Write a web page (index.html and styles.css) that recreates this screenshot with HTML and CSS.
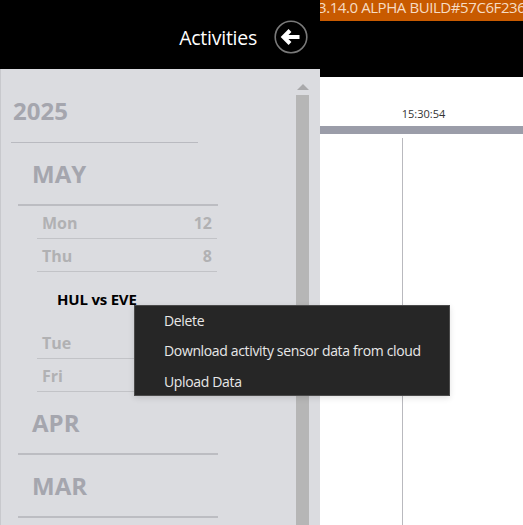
FILE: index.html
```html
<!DOCTYPE html>
<html lang="en">

<head>
    <meta charset="UTF-8">
    <meta name="viewport" content="width=device-width, initial-scale=1.0">
    <link rel="stylesheet" href="styles.css">
</head>

<body>
    <div class="App">
        <div class="Sidebar">
            <div class="SidebarHeader">
                <span class="SidebarTitle">Activities</span>
                <svg class="BackIcon" width="34" height="34" viewBox="0 0 34 34">
                    <circle cx="17" cy="17" r="15.8" fill="none" stroke="#7a7a7a" stroke-width="1.6" />
                    <path d="M16 10.5 L9.5 17 L16 23.5 M10 17 H25.5" fill="none" stroke="#ffffff" stroke-width="4" />
                </svg>
            </div>
            <div class="SidebarBody">
                <div class="ActivityList">
                    <div class="Year">2025</div>
                    <div class="Month">MAY</div>
                    <div class="Day"><span>Mon</span><span>12</span></div>
                    <div class="Day"><span>Thu</span><span>8</span></div>
                    <div class="Activity">HUL vs EVE</div>
                    <div class="Day"><span>Tue</span></div>
                    <div class="Day"><span>Fri</span></div>
                    <div class="Month">APR</div>
                    <div class="Month">MAR</div>
                </div>
                <div class="Scrollbar">
                    <div class="ScrollArrow"></div>
                    <div class="ScrollThumb"></div>
                </div>
            </div>
        </div>
        <div class="Main">
            <div class="TopBar">
                <div class="BuildBanner">3.14.0 ALPHA BUILD#57C6F236</div>
            </div>
            <div class="Timeline">
                <div class="TimeLabel">15:30:54</div>
                <div class="TimeBar"></div>
                <div class="TimeMarker"></div>
            </div>
        </div>
    </div>

    <div class="ContextMenu">
        <div class="MenuItem">Delete</div>
        <div class="MenuItem">Download activity sensor data from cloud</div>
        <div class="MenuItem">Upload Data</div>
    </div>
</body>

</html>
```

FILE: styles.css
```css
body {
    margin: 0;
    font-family: 'Open Sans', 'Noto Sans', sans-serif;
    background-color: #ffffff;
    overflow: hidden;
}

.App {
    display: flex;
    width: 523px;
    height: 525px;
}

.Sidebar {
    width: 320px;
    display: flex;
    flex-direction: column;
}

.SidebarHeader {
    height: 69px;
    box-sizing: border-box;
    background: #000000;
    display: flex;
    justify-content: flex-end;
    align-items: center;
    padding: 5px 12px 0 0;
    gap: 17px;
}

.SidebarTitle {
    color: #ffffff;
    font-size: 19.5px;
    letter-spacing: -0.25px;
}

.SidebarBody {
    flex: 1;
    display: flex;
    background: #dbdce0;
    border-left: 1px solid #c8c9cd;
    overflow: hidden;
}

.ActivityList {
    width: 295px;
    box-sizing: border-box;
    padding: 25px 0 0 10px;
}

.Year {
    width: 187px;
    height: 49px;
    box-sizing: border-box;
    padding-left: 2px;
    border-bottom: 1px solid #b9bac0;
    color: #a5a6ae;
    font-size: 24px;
    font-weight: 700;
    line-height: 33px;
}

.Month {
    width: 200px;
    height: 63px;
    box-sizing: border-box;
    margin-left: 7px;
    padding: 14px 0 0 14px;
    border-bottom: 2px solid #bcbdc2;
    color: #a5a6ae;
    font-size: 24px;
    font-weight: 700;
    line-height: 33px;
}

.Day {
    width: 180px;
    height: 33px;
    box-sizing: border-box;
    margin-left: 26px;
    padding: 7px 5px 0 5px;
    display: flex;
    justify-content: space-between;
    border-bottom: 1px solid #c2c3c7;
    color: #b1b1b3;
    font-size: 16px;
    font-weight: 700;
    line-height: 21px;
}

.Activity {
    height: 54px;
    box-sizing: border-box;
    padding: 18px 0 0 46px;
    color: #000000;
    font-size: 15px;
    font-weight: 700;
    line-height: 19px;
    letter-spacing: -0.2px;
}

.Scrollbar {
    width: 13px;
    display: flex;
    flex-direction: column;
    align-items: center;
}

.ScrollArrow {
    width: 0;
    height: 0;
    margin-top: 15px;
    border-left: 6px solid transparent;
    border-right: 6px solid transparent;
    border-bottom: 6px solid #a9a9ab;
}

.ScrollThumb {
    width: 13px;
    flex: 1;
    margin-top: 5px;
    background: #b6b6b6;
}

.Main {
    flex: 1;
    min-width: 0;
    display: flex;
    flex-direction: column;
}

.TopBar {
    height: 77px;
    background: #000000;
    overflow: hidden;
}

.BuildBanner {
    height: 21px;
    background: #c85a00;
    color: #f6dcc4;
    font-size: 15px;
    line-height: 15px;
    letter-spacing: -0.42px;
    text-indent: -2px;
    white-space: nowrap;
}

.Timeline {
    flex: 1;
    display: flex;
    flex-direction: column;
}

.TimeLabel {
    margin-top: 30px;
    width: 207px;
    text-align: center;
    color: #333333;
    font-size: 11px;
    line-height: 14px;
}

.TimeBar {
    height: 8px;
    margin-top: 5px;
    background: #9b9da9;
}

.TimeMarker {
    width: 1px;
    flex: 1;
    margin: 4px 0 0 82px;
    background: #b9b9be;
}

.ContextMenu {
    position: absolute;
    left: 134px;
    top: 305px;
    width: 316px;
    height: 91px;
    box-sizing: border-box;
    background: #262626;
    border: 1px solid #4a4a4a;
    box-shadow: 0 2px 6px rgba(0, 0, 0, 0.12);
    color: #e8e8e8;
    font-size: 14px;
    letter-spacing: -0.35px;
}

.MenuItem {
    height: 30.4px;
    padding-left: 29px;
    line-height: 30px;
    white-space: nowrap;
}
```
